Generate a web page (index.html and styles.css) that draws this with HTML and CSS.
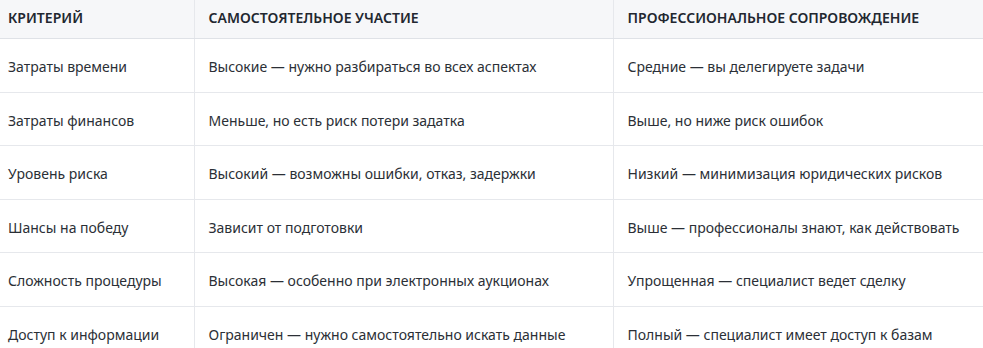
FILE: index.html
```html
<!DOCTYPE html>
<html lang="ru">
<head>
<meta charset="utf-8">
<link rel="stylesheet" href="styles.css">
</head>
<body>
<table class="cmp">
  <colgroup>
    <col class="c1"><col class="c2"><col class="c3">
  </colgroup>
  <thead>
    <tr><th>Критерий</th><th>Самостоятельное участие</th><th>Профессиональное сопровождение</th></tr>
  </thead>
  <tbody>
    <tr><td>Затраты времени</td><td>Высокие — нужно разбираться во всех аспектах</td><td>Средние — вы делегируете задачи</td></tr>
    <tr><td>Затраты финансов</td><td>Меньше, но есть риск потери задатка</td><td>Выше, но ниже риск ошибок</td></tr>
    <tr><td>Уровень риска</td><td>Высокий — возможны ошибки, отказ, задержки</td><td>Низкий — минимизация юридических рисков</td></tr>
    <tr><td>Шансы на победу</td><td>Зависит от подготовки</td><td>Выше — профессионалы знают, как действовать</td></tr>
    <tr><td>Сложность процедуры</td><td>Высокая — особенно при электронных аукционах</td><td>Упрощенная — специалист ведет сделку</td></tr>
    <tr><td>Доступ к информации</td><td>Ограничен — нужно самостоятельно искать данные</td><td>Полный — специалист имеет доступ к базам</td></tr>
  </tbody>
</table>
</body>
</html>
```
FILE: styles.css
```css
html, body {
  margin: 0;
  padding: 0;
  background: #ffffff;
}
body {
  font-family: "Noto Sans", "Open Sans", sans-serif;
  font-size: 14px;
  color: #2b2f36;
}
.cmp {
  border-collapse: collapse;
  width: 983px;
  table-layout: fixed;
}
.c1 { width: 194px; }
.c2 { width: 419px; }
.c3 { width: 370px; }
.cmp th {
  background: #f6f7f9;
  text-align: left;
  font-weight: 600;
  text-transform: uppercase;
  color: #222730;
  padding: 7px 14px 10px;
  line-height: 21px;
  border-bottom: 1px solid #dfe2e7;
  border-right: 1px solid #e6e8ec;
  white-space: nowrap;
}
.cmp td {
  padding: 18px 14px 14px;
  line-height: 20.6px;
  border-bottom: 1px solid #e6e8ec;
  border-right: 1px solid #e6e8ec;
  white-space: nowrap;
}
.cmp th:first-child, .cmp td:first-child { padding-left: 8px; }
.cmp th:last-child, .cmp td:last-child { border-right: none; }
```
